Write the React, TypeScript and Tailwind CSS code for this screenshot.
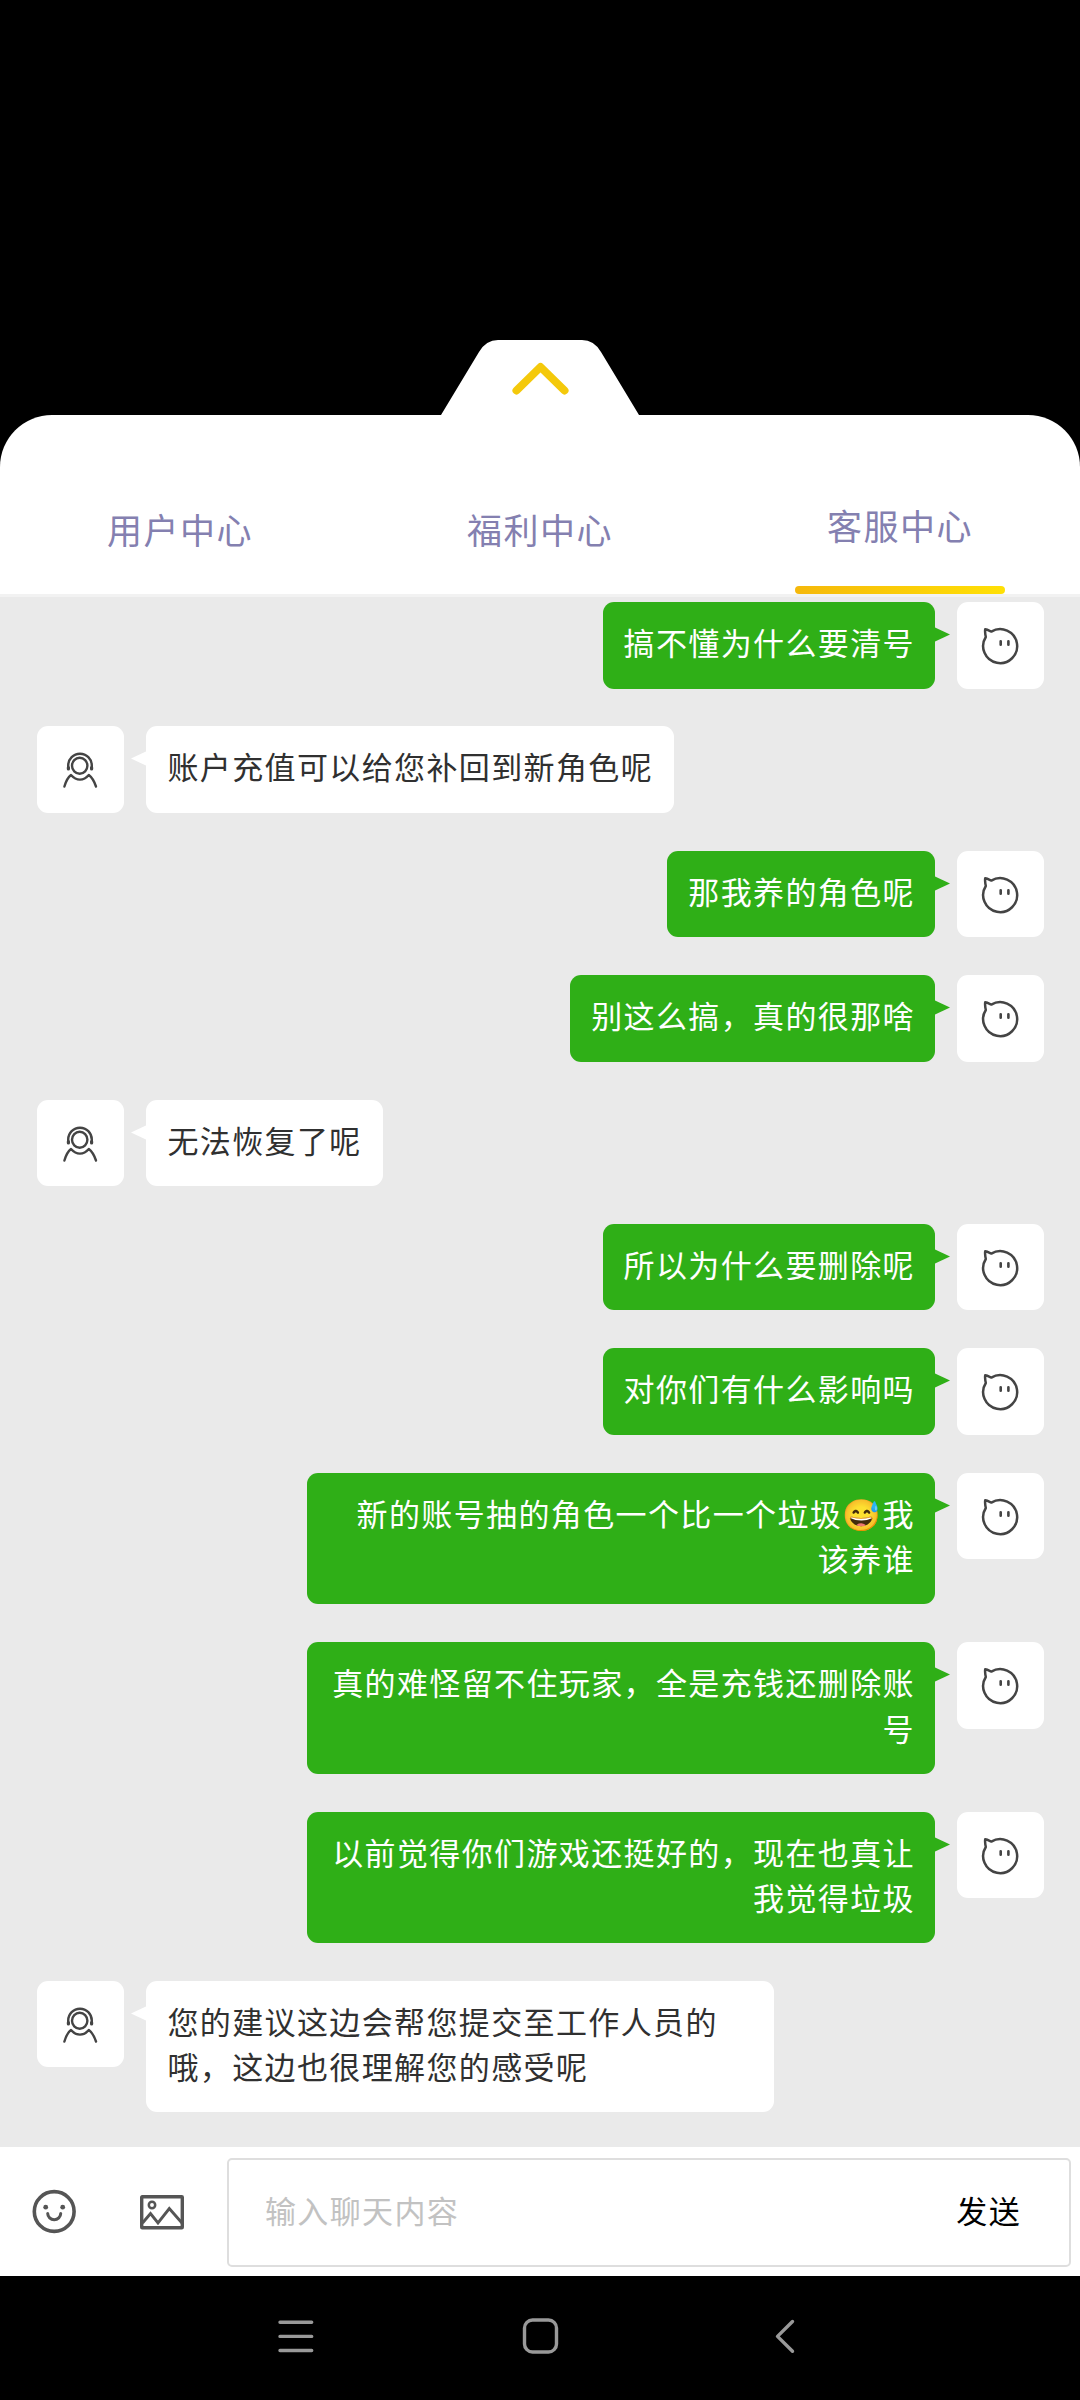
import React from "react";

const FONT = "font-['Noto_Sans_CJK_SC','Noto_Sans',sans-serif]";

type Message = { from: "user" | "agent"; text: string; tall?: boolean };

const messages: Message[] = [
  { from: "user", text: "搞不懂为什么要清号" },
  { from: "agent", text: "账户充值可以给您补回到新角色呢" },
  { from: "user", text: "那我养的角色呢" },
  { from: "user", text: "别这么搞，真的很那啥" },
  { from: "agent", text: "无法恢复了呢" },
  { from: "user", text: "所以为什么要删除呢" },
  { from: "user", text: "对你们有什么影响吗" },
  { from: "user", text: "新的账号抽的角色一个比一个垃圾😅我\n该养谁", tall: true },
  { from: "user", text: "真的难怪留不住玩家，全是充钱还删除账\n号", tall: true },
  { from: "user", text: "以前觉得你们游戏还挺好的，现在也真让\n我觉得垃圾", tall: true },
  { from: "agent", text: "您的建议这边会帮您提交至工作人员的\n哦，这边也很理解您的感受呢", tall: true },
];

function UserIcon() {
  return (
    <svg className="h-[87px] w-[87px]" viewBox="0 0 87 87" fill="none" stroke="#444" strokeWidth="2.500" strokeLinejoin="round" strokeLinecap="round">
      <path d="M34.300 29.600A17 17 0 1 1 28.800 35C28.200 32.500 27.900 30 28.200 27.300C30.300 27.600 32.300 28.700 34.300 29.600Z" />
      <path d="M43.700 39.200v3.600M51.400 39.200v3.600" strokeWidth="2.600" />
    </svg>
  );
}

function AgentIcon() {
  return (
    <svg className="h-[87px] w-[87px]" viewBox="0 0 87 87" fill="none" stroke="#444" strokeWidth="2.400" strokeLinecap="round" strokeLinejoin="round">
      <ellipse cx="42.700" cy="39.700" rx="7.700" ry="8" />
      <path d="M31.200 42.500v-3a11.800 11.800 0 0 1 23.600 0v3" />
      <path d="M31.400 41.500v1.400M54.600 41.500v1.400" strokeWidth="3.200" />
      <path d="M27.400 60.500C28.700 56 30.700 51.500 34 49C39.500 55.200 46.500 55.200 51.800 49C55.200 51.500 57.500 56 59 60.500" />
    </svg>
  );
}

function Avatar({ from }: { from: Message["from"] }) {
  return (
    <div className="h-[86.500px] w-[87px] shrink-0 rounded-[11px] bg-white">
      {from === "user" ? <UserIcon /> : <AgentIcon />}
    </div>
  );
}

function MessageRow({ message }: { message: Message }) {
  const mine = message.from === "user";
  return (
    <div className={`flex items-start gap-[22px] ${mine ? "flex-row-reverse" : ""}`}>
      <Avatar from={message.from} />
      <div
        className={`relative whitespace-pre rounded-[11px] pt-[17px] pl-[21px] text-[31px] leading-[45.500px] tracking-[1.380px] ${
          mine ? "bg-[#2faf17] pr-[20px] text-right text-white" : "bg-white pr-[21px] text-[#303030]"
        } ${message.tall ? "h-[131.500px] w-[628px]" : "h-[86.500px]"}`}
      >
        {message.text}
        {mine ? (
          <svg className="absolute top-[25px] -right-[15px] h-[15px] w-[16px]" viewBox="0 0 16 15">
            <path d="M0 0L16 7.500L0 15Z" fill="#2faf17" />
          </svg>
        ) : (
          <svg className="absolute top-[25px] -left-[15px] h-[15px] w-[16px]" viewBox="0 0 16 15">
            <path d="M16 0L0 7.500L16 15Z" fill="#fff" />
          </svg>
        )}
      </div>
    </div>
  );
}

function Tab({ label, active = false }: { label: string; active?: boolean }) {
  return (
    <div className="flex h-full flex-1 flex-col items-center">
      <div className={`text-[35px] leading-[50px] tracking-[1.500px] text-[#8480b0] ${active ? "mt-[85px]" : "mt-[89px]"}`}>{label}</div>
      {active && <div className="mt-auto h-[8px] w-[210px] rounded-[4px] bg-linear-to-r from-[#f5b80b] to-[#ffe005]" />}
    </div>
  );
}

export default function App() {
  return (
    <div className={`flex h-[2400px] w-[1080px] flex-col overflow-hidden bg-black ${FONT}`}>
      <div className="flex h-[415px] shrink-0 items-end justify-center">
        <svg className="h-[75px] w-[198px]" viewBox="0 0 198 75">
          <path d="M0 75L38 12Q45 0 57 0H141Q153 0 160 12L198 75Z" fill="#fff" />
          <path d="M75.500 50.500L99.500 27L123.500 50.500" fill="none" stroke="#f4c90b" strokeWidth="8" strokeLinecap="round" strokeLinejoin="round" />
        </svg>
      </div>
      <div className="flex h-[179px] shrink-0 rounded-t-[52px] bg-white">
        <Tab label="用户中心" />
        <Tab label="福利中心" />
        <Tab label="客服中心" active />
      </div>
      <div className="flex h-[1553px] shrink-0 flex-col gap-[37.900px] border-t-[3px] border-[#f2f2f2] bg-[#eaeaea] pt-[5px] pr-[36px] pl-[37.400px]">
        {messages.map((m) => (
          <MessageRow key={m.text} message={m} />
        ))}
      </div>
      <div className="flex h-[129px] shrink-0 items-start bg-white pr-[9px] pt-[11px]">
        <div className="flex h-[108px] w-[227px] items-center">
          <svg className="ml-[31px] h-[46px] w-[46px]" viewBox="0 0 46 46" fill="none" stroke="#555" strokeWidth="3.600" strokeLinecap="round">
            <circle cx="23.200" cy="22.500" r="19.900" />
            <path d="M16.700 24.500a6.500 6.200 0 0 0 13 0" strokeWidth="3" />
            <circle cx="14.700" cy="18.200" r="2.400" fill="#555" stroke="none" />
            <circle cx="31.700" cy="18.200" r="2.400" fill="#555" stroke="none" />
          </svg>
          <svg className="ml-[62px] h-[38px] w-[46px]" viewBox="0 0 46 38" fill="none" stroke="#555" strokeWidth="3.400">
            <rect x="2.700" y="3.700" width="40.600" height="31" rx="0.500" />
            <circle cx="13" cy="12" r="3.200" strokeWidth="2.500" />
            <path d="M3.500 30L11.500 20.500L19 30L30.300 15.500L43 30" strokeWidth="2.900" />
          </svg>
        </div>
        <div className="flex h-[109px] flex-1 items-center justify-between rounded-[5px] border-2 border-[#dedede] pr-[48px] pb-[5px] pl-[36px] text-[31px] leading-[46px] tracking-[1.360px]">
          <span className="text-[#c2c2c2]">输入聊天内容</span>
          <span className="text-black">发送</span>
        </div>
      </div>
      <div className="flex flex-1 items-center justify-center">
        <svg className="h-[124px] w-[600px]" viewBox="0 0 600 124" fill="none" stroke="#999" strokeWidth="3.400" strokeLinecap="round" strokeLinejoin="round">
          <path d="M40 46.300H71.700M40 60.400H71.700M40 74.500H71.700" />
          <rect x="284.500" y="44" width="32" height="32" rx="8" />
          <path d="M552.500 45.500L537.500 60.400L552.500 75.200" />
        </svg>
      </div>
    </div>
  );
}
